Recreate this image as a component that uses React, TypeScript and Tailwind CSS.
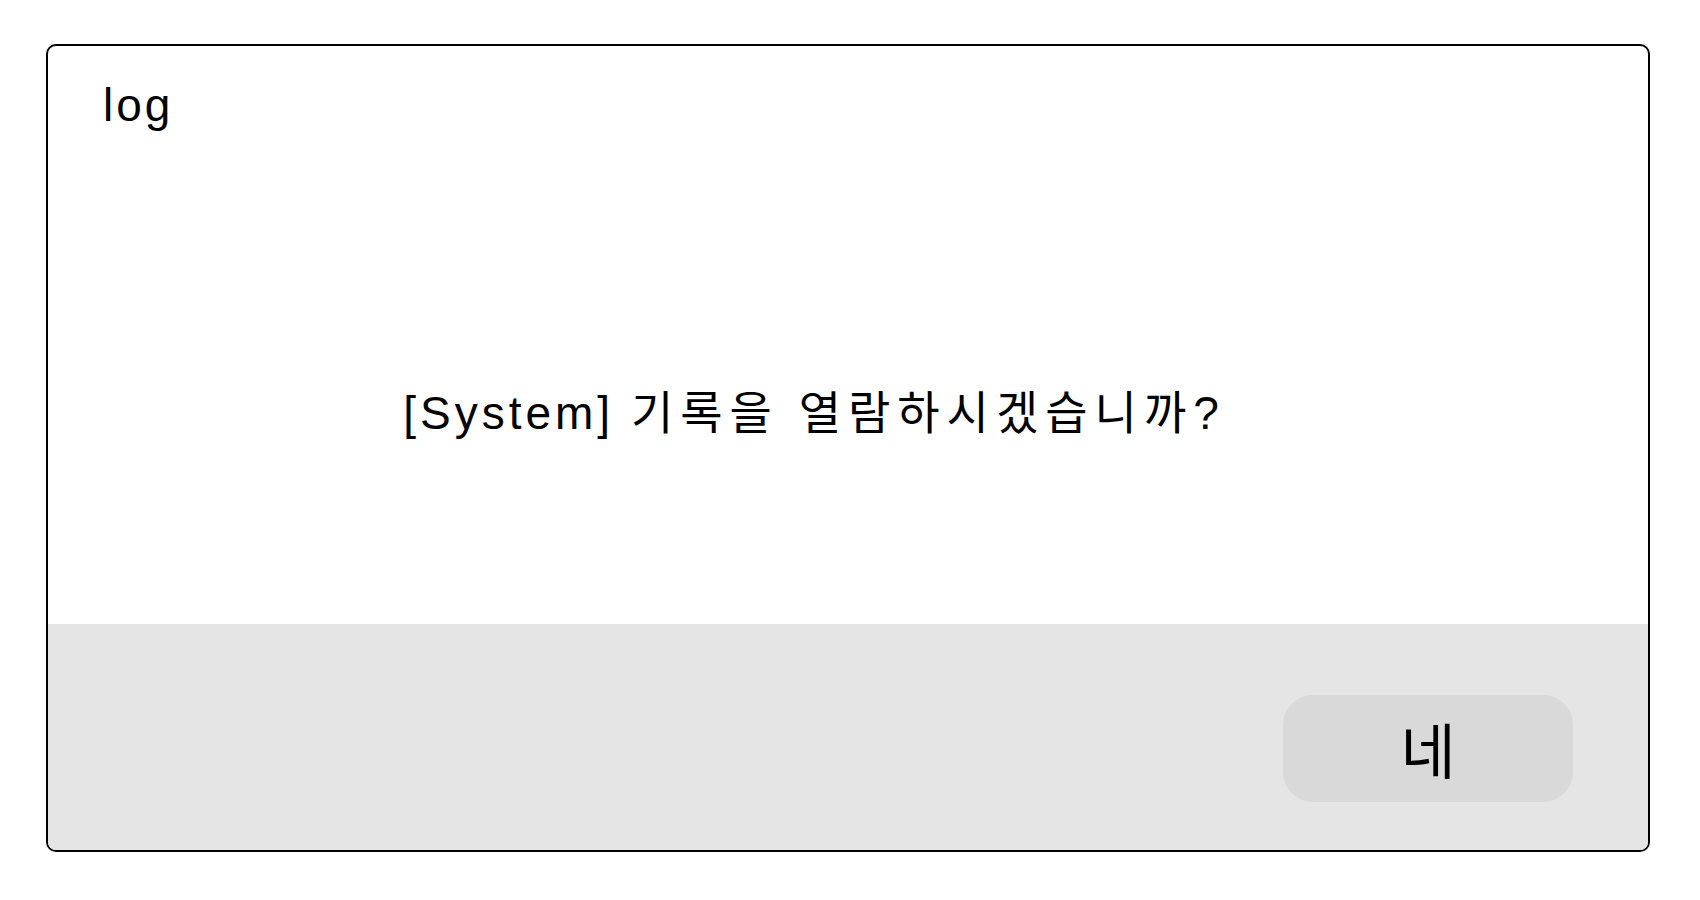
import React from "react";

const font = { fontFamily: '"Liberation Sans", "Noto Sans CJK KR", sans-serif' };

export default function App() {
  return (
    <div className="w-[1700px] h-[900px] bg-white pl-[46px] pt-[44px]" style={font}>
      <div className="w-[1604px] h-[808px] border-2 border-black rounded-[10px] overflow-hidden flex flex-col bg-white">
        {/* Title */}
        <div className="h-[156px] px-[55px] pt-[36px]">
          <span className="text-[46px] font-normal text-black leading-none tracking-[3px]">log</span>
        </div>

        {/* Message */}
        <div className="flex-1 flex items-center justify-center pr-[70px]">
          <p className="text-[46px] font-normal text-black tracking-[4px]">
            [System] <span className="tracking-[7px]">기록을 열람하시겠습니까</span>?
          </p>
        </div>

        {/* Footer */}
        <div className="h-[226px] bg-[#e5e5e5] flex items-center justify-end pr-[75px] pt-[22px]">
          <button className="w-[290px] h-[107px] rounded-[30px] bg-[#d9d9d9] text-[60px] font-normal text-black flex items-center justify-center pt-[12px]">
            네
          </button>
        </div>
      </div>
    </div>
  );
}
